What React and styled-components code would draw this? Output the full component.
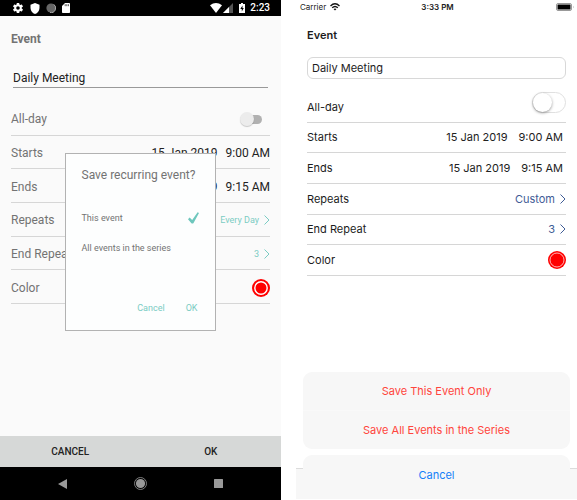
import React, { useState } from "react";
import styled, { createGlobalStyle, css } from "styled-components";

const GlobalStyle = createGlobalStyle`
  * { box-sizing: border-box; }
  body { margin: 0; background: #fff; }
  button, input { font: inherit; color: inherit; margin: 0; padding: 0; border: 0; background: none; }
  button { cursor: pointer; }
  h1, h2 { margin: 0; }
  svg { display: block; }
`;

const Page = styled.div`
  display: grid;
  grid-template-columns: 1fr 1fr;
  column-gap: 15px;
  min-height: 100vh;
`;

const Screen = styled.section`
  position: relative;
  display: flex;
  flex-direction: column;
  min-width: 0;
`;

const AndroidScreen = styled(Screen)`
  background: #fafafa;
  color: #737373;
  font: 12px/18px Roboto, sans-serif;
`;

const IosScreen = styled(Screen)`
  background: #fff;
  color: #1c1c1c;
  font: 11px/18px Inter, sans-serif;
`;

const Spacer = styled.div`
  flex: 1;
`;

const AndroidStatus = styled.header`
  display: flex;
  align-items: center;
  height: 16px;
  padding: 0 11px 0 12px;
  background: #000;
  color: #fff;
  font-size: 10px;
  font-weight: 500;
`;

const StatusIcons = styled.div`
  display: flex;
  align-items: center;
  gap: ${(p) => p.$gap}px;
`;

const Clock = styled.time`
  margin-left: 5px;
`;

const IosStatus = styled.header`
  display: grid;
  grid-template-columns: 1fr auto 1fr;
  align-items: center;
  height: 14px;
  padding: 0 2px 0 4px;
  font-size: 8px;
  line-height: 14px;

  time { font-weight: 600; }
  > svg { justify-self: end; }
`;

const Carrier = styled.span`
  display: flex;
  align-items: center;
  gap: 4px;
`;

const Form = styled.form`
  display: flex;
  flex-direction: column;
  padding: ${(p) => (p.$ios ? "12px 11px 0" : "14px 11px 0")};
`;

const Title = styled.h1`
  font-size: ${(p) => (p.$ios ? 11 : 12)}px;
  font-weight: ${(p) => (p.$ios ? 600 : 700)};
  line-height: 18px;
`;

const AndroidInput = styled.input`
  && {
    height: 20px;
    margin: 20px 2px 14px;
    padding-top: 1px;
    border-bottom: 1px solid #999;
    border-radius: 0;
    outline: 0;
    color: #222;
  }
`;

const IosInput = styled.input`
  && {
    height: 22px;
    margin: 13px 0;
    padding: 0 4px;
    border: 1px solid #d8d8d8;
    border-radius: 6px;
    outline: 0;
  }
`;

const Rows = styled.div`
  display: grid;
  grid-auto-rows: 1fr;
  height: ${(p) => (p.$ios ? 184 : 202)}px;
`;

const Row = styled.div`
  display: flex;
  align-items: center;
  padding-top: ${(p) => (p.$ios ? 0 : 2)}px;
  border-bottom: 1px solid #d6d6d6;
`;

const RowLabel = styled.label`
  flex: 1;
  white-space: nowrap;
`;

const DateTime = styled.div`
  display: flex;
  gap: ${(p) => (p.$ios ? 11 : 8)}px;
  padding-right: ${(p) => (p.$ios ? 3 : 0)}px;
  color: #222;
  white-space: nowrap;
`;

const LinkValue = styled.button`
  && {
    display: flex;
    align-items: center;
    gap: 5px;
    color: ${(p) => (p.$ios ? "#3f5c96" : "#7accc3")};
    font-size: ${(p) => (p.$ios ? 11 : 9)}px;
  }
`;

const Swatch = styled.button`
  && { border-radius: 50%; }
`;

const AndroidSwitch = styled.input.attrs({ type: "checkbox", role: "switch" })`
  && {
    appearance: none;
    display: flex;
    align-items: center;
    width: 22px;
    height: 9px;
    margin-right: 8px;
    border-radius: 5px;
    background: linear-gradient(to right, transparent 5px, #b1b1b1 5px);
    cursor: pointer;
  }
  &::before {
    content: "";
    width: 14px;
    height: 14px;
    flex: none;
    border-radius: 50%;
    background: #ececec;
    box-shadow: 0 1px 1px #0003;
  }
  &:checked::before { margin-left: 8px; background: #7accc3; }
`;

const IosSwitch = styled.input.attrs({ type: "checkbox", role: "switch" })`
  && {
    appearance: none;
    display: flex;
    align-items: center;
    align-self: flex-start;
    width: 34px;
    height: 21px;
    border: 1px solid #e0e0e0;
    border-radius: 11px;
    cursor: pointer;
  }
  &::before {
    content: "";
    width: 19px;
    height: 19px;
    border-radius: 50%;
    background: #fff;
    box-shadow: 0 1px 3px #0006;
  }
  &:checked { background: #4cd964; }
  &:checked::before { margin-left: 13px; }
`;

const Actions = styled.footer`
  display: grid;
  grid-template-columns: 1fr 1fr;
  height: 31px;
  background: #d6d8d7;
  color: #222;
  font-size: 10px;
  font-weight: 500;
`;

const NavBar = styled.nav`
  display: grid;
  grid-template-columns: 1fr 1fr 1fr;
  height: 33px;
  padding: 0 24px;
  background: #000;
`;

const NavButton = styled.button`
  display: grid;
  place-items: center;
`;

const Dialog = styled.div`
  position: absolute;
  top: 153px;
  left: 50%;
  width: 151px;
  height: 178px;
  display: flex;
  flex-direction: column;
  margin-left: -76px;
  padding: 11px 16px 13px;
  border: 1px solid #b2b2b2;
  background: #fdfefe;
`;

const DialogTitle = styled.h2`
  margin-bottom: 18px;
  font-size: 12px;
  font-weight: 400;
  line-height: 20px;
  white-space: nowrap;
`;

const Option = styled.label`
  display: flex;
  align-items: center;
  justify-content: space-between;
  height: 30px;
  font-size: 9px;
  white-space: nowrap;
  cursor: pointer;

  input { appearance: none; width: 0; height: 0; }
  span { flex: 1; }
  svg { visibility: hidden; }
  input:checked ~ svg { visibility: visible; }
`;

const DialogActions = styled.div`
  display: flex;
  justify-content: flex-end;
  gap: 21px;
  margin-top: auto;
  padding-right: 1px;
  color: #7accc3;
  font-size: 9px;
`;

const Toolbar = styled.footer`
  height: 31px;
  margin-bottom: 1px;
  border-top: 1px solid #dcdcdc;
  background: #f7f7f7;
`;

const Sheet = styled.div`
  position: absolute;
  inset: auto 7px 6px;
  display: flex;
  flex-direction: column;
  gap: 6px;
`;

const SheetGroup = styled.div`
  display: flex;
  flex-direction: column;
  overflow: hidden;
  border-radius: 9px;
  background: #f7f7f7;
`;

const SheetButton = styled.button`
  && {
    height: ${(p) => (p.$cancel ? 39 : 38)}px;
    color: ${(p) => (p.$cancel ? "#1580f8" : "#ff453c")};
    ${(p) => p.$divided && css`
      height: 39px;
      border-top: 1px solid #f9f9f9;
    `}
  }
`;

const Chevron = () => (
  <svg width="6" height="10" viewBox="0 0 6 10" fill="none" stroke="currentColor" aria-hidden="true">
    <path d="M.5 .5 5 5 .5 9.500" />
  </svg>
);

const ColorDot = ({ fine }) => (
  <svg width="18" height="18" viewBox="0 0 18 18" aria-hidden="true">
    <circle cx="9" cy="9" r="9" fill="#f00" />
    <circle cx="9" cy="9" r={fine ? 7 : 6.2} fill="none" stroke="#fff" strokeWidth={fine ? 0.7 : 1.4} />
  </svg>
);

const Gear = () => (
  <svg width="12" height="12" viewBox="0 0 24 24" fill="#fff" aria-hidden="true">
    <path d="M19.4 13a7.800 7.800 0 0 0 0-2l2.200-1.700c.2-.1.200-.4.100-.6l-2-3.500c-.1-.2-.4-.3-.6-.2l-2.500 1a7.500 7.500 0 0 0-1.700-1L14.500 2.400A.5.500 0 0 0 14 2h-4c-.2 0-.4.200-.5.400L9.100 5a7.500 7.500 0 0 0-1.700 1L4.900 5c-.2-.1-.5 0-.6.200l-2 3.500c-.1.200-.1.400.1.600L4.600 11a8 8 0 0 0 0 2l-2.200 1.700c-.2.100-.2.400-.1.600l2 3.500c.1.200.4.300.6.200l2.500-1a7.500 7.500 0 0 0 1.700 1l.4 2.600c0 .2.200.4.500.4h4c.2 0 .4-.2.500-.4l.4-2.600a7.500 7.500 0 0 0 1.700-1l2.500 1c.2.100.5 0 .6-.2l2-3.500c.1-.2.100-.5-.1-.6ZM12 15.600a3.600 3.600 0 1 1 0-7.200 3.600 3.600 0 0 1 0 7.200Z" />
  </svg>
);

const Shield = () => (
  <svg width="10" height="11" viewBox="0 0 10 11" fill="#fff" aria-hidden="true">
    <path d="M5 0 9.500 1.700V5C9.500 8 7.500 10.200 5 11 2.500 10.200.5 8 .5 5V1.700Z" />
  </svg>
);

const Sync = () => (
  <svg width="10" height="10" viewBox="0 0 10 10" aria-hidden="true">
    <circle cx="5" cy="5" r="4.600" fill="#666" />
    <path d="M7.800 1.400A4.500 4.500 0 0 1 4 9.400" fill="none" stroke="#aaa" />
  </svg>
);

const SdCard = () => (
  <svg width="8" height="10" viewBox="0 0 8 10" aria-hidden="true">
    <path d="M3 0h4.200q.8 0 .8.800v8.400q0 .8-.8.800H.8Q0 10 0 9.200V3Z" fill="#fff" />
    <path d="M3.200 1.200v2M4.800 1.200v2M6.400 1.200v2" stroke="#333" strokeWidth=".8" />
  </svg>
);

const AndroidWifi = () => (
  <svg width="12" height="10" viewBox="0 0 12 10" fill="#fff" aria-hidden="true">
    <path d="M0 2.200Q6-2 12 2.200L6 10Z" />
  </svg>
);

const Signal = () => (
  <svg width="10" height="10" viewBox="0 0 10 10" aria-hidden="true">
    <path d="M10 0v10H0Z" fill="#555" />
    <path d="M6 4v6H0Z" fill="#fff" />
  </svg>
);

const AndroidBattery = () => (
  <svg width="6" height="10" viewBox="0 0 6 10" aria-hidden="true">
    <path d="M2 0h2v1h2v9H0V1h2Z" fill="#fff" />
    <path d="M3.500 2.500 1.300 6h1.500v2.500L4.800 5H3.500Z" fill="#000" />
  </svg>
);

const IosWifi = () => (
  <svg width="10" height="8" viewBox="0 0 10 8" fill="none" stroke="#111" strokeWidth="1.400" aria-hidden="true">
    <path d="M.5 2.900Q5-1.200 9.500 2.900M2.200 4.800Q5 2.200 7.800 4.800" />
    <path d="M5 7.600 3.500 6Q5 4.900 6.500 6Z" fill="#111" stroke="none" />
  </svg>
);

const IosBattery = () => (
  <svg width="19" height="8" viewBox="0 0 19 8" aria-hidden="true">
    <rect x=".5" y=".5" width="15" height="7" rx="1.500" fill="#fff" stroke="#999" />
    <rect x="1.500" y="1.500" width="13" height="5" rx=".5" />
    <path d="M17 2.800q1.200 1.200 0 2.400" fill="#999" />
  </svg>
);

const Check = () => (
  <svg width="11" height="12" viewBox="0 0 11 12" fill="#6ec7bd" aria-hidden="true">
    <path d="M9.600 .3 11 1.100 5.400 11.200Q4.300 12 3.400 11.200L0 7.300 1.600 5.600 4.200 7.900Z" />
  </svg>
);

function EventRows({ ios, starts, ends, repeats }) {
  const id = ios ? "ios" : "android";
  const Switch = ios ? IosSwitch : AndroidSwitch;
  return (
    <Rows $ios={ios}>
      <Row $ios={ios}>
        <RowLabel htmlFor={`${id}-all-day`}>All-day</RowLabel>
        <Switch id={`${id}-all-day`} />
      </Row>
      {[["Starts", starts], ["Ends", ends]].map(([label, time]) => (
        <Row key={label} $ios={ios}>
          <RowLabel htmlFor={`${id}-${label}`}>{label}</RowLabel>
          <DateTime $ios={ios}>
            <button type="button" id={`${id}-${label}`}>15 Jan 2019</button>
            <button type="button">{time}</button>
          </DateTime>
        </Row>
      ))}
      {[["Repeats", repeats], ["End Repeat", "3"]].map(([label, value]) => (
        <Row key={label} $ios={ios}>
          <RowLabel htmlFor={`${id}-${label}`}>{label}</RowLabel>
          <LinkValue type="button" id={`${id}-${label}`} $ios={ios}>
            {value}
            <Chevron />
          </LinkValue>
        </Row>
      ))}
      <Row $ios={ios}>
        <RowLabel htmlFor={`${id}-color`}>Color</RowLabel>
        <Swatch type="button" id={`${id}-color`}>
          <ColorDot fine={ios} />
        </Swatch>
      </Row>
    </Rows>
  );
}

function Android() {
  const [scope, setScope] = useState("This event");
  return (
    <AndroidScreen>
      <AndroidStatus>
        <StatusIcons $gap={6}><Gear /><Shield /><Sync /><SdCard /></StatusIcons>
        <Spacer />
        <StatusIcons $gap={6}>
          <StatusIcons $gap={1}><AndroidWifi /><Signal /></StatusIcons>
          <AndroidBattery />
        </StatusIcons>
        <Clock>2:23</Clock>
      </AndroidStatus>
      <Form>
        <Title>Event</Title>
        <AndroidInput aria-label="Event title" defaultValue="Daily Meeting" />
        <EventRows starts="9:00 AM" ends="9:15 AM" repeats="Every Day" />
      </Form>
      <Spacer />
      <Actions>
        <button type="button">CANCEL</button>
        <button type="button">OK</button>
      </Actions>
      <NavBar>
        <NavButton aria-label="Back">
          <svg width="9" height="10" viewBox="0 0 9 10" fill="#999"><path d="M9 0v10L0 5Z" /></svg>
        </NavButton>
        <NavButton aria-label="Home">
          <svg width="13" height="13" viewBox="0 0 13 13">
            <circle cx="6.500" cy="6.500" r="4.600" fill="#999" />
            <circle cx="6.500" cy="6.500" r="6" fill="none" stroke="#999" strokeWidth=".8" />
          </svg>
        </NavButton>
        <NavButton aria-label="Recent apps">
          <svg width="9" height="9" viewBox="0 0 9 9" fill="#999"><rect width="9" height="9" rx=".5" /></svg>
        </NavButton>
      </NavBar>
      <Dialog role="dialog" aria-labelledby="dialog-title">
        <DialogTitle id="dialog-title">Save recurring event?</DialogTitle>
        {["This event", "All events in the series"].map((option) => (
          <Option key={option}>
            <input type="radio" name="scope" checked={scope === option} onChange={() => setScope(option)} />
            <span>{option}</span>
            <Check />
          </Option>
        ))}
        <DialogActions>
          <button type="button">Cancel</button>
          <button type="button">OK</button>
        </DialogActions>
      </Dialog>
    </AndroidScreen>
  );
}

function Ios() {
  return (
    <IosScreen>
      <IosStatus>
        <Carrier>Carrier <IosWifi /></Carrier>
        <time>3:33 PM</time>
        <IosBattery />
      </IosStatus>
      <Form $ios>
        <Title $ios>Event</Title>
        <IosInput aria-label="Event title" defaultValue="Daily Meeting" />
        <EventRows ios starts="9:00 AM" ends="9:15 AM" repeats="Custom" />
      </Form>
      <Spacer />
      <Toolbar />
      <Sheet role="dialog" aria-label="Save recurring event">
        <SheetGroup>
          <SheetButton type="button">Save This Event Only</SheetButton>
          <SheetButton type="button" $divided>Save All Events in the Series</SheetButton>
        </SheetGroup>
        <SheetGroup>
          <SheetButton type="button" $cancel>Cancel</SheetButton>
        </SheetGroup>
      </Sheet>
    </IosScreen>
  );
}

export default function App() {
  return (
    <>
      <GlobalStyle />
      <Page>
        <Android />
        <Ios />
      </Page>
    </>
  );
}
